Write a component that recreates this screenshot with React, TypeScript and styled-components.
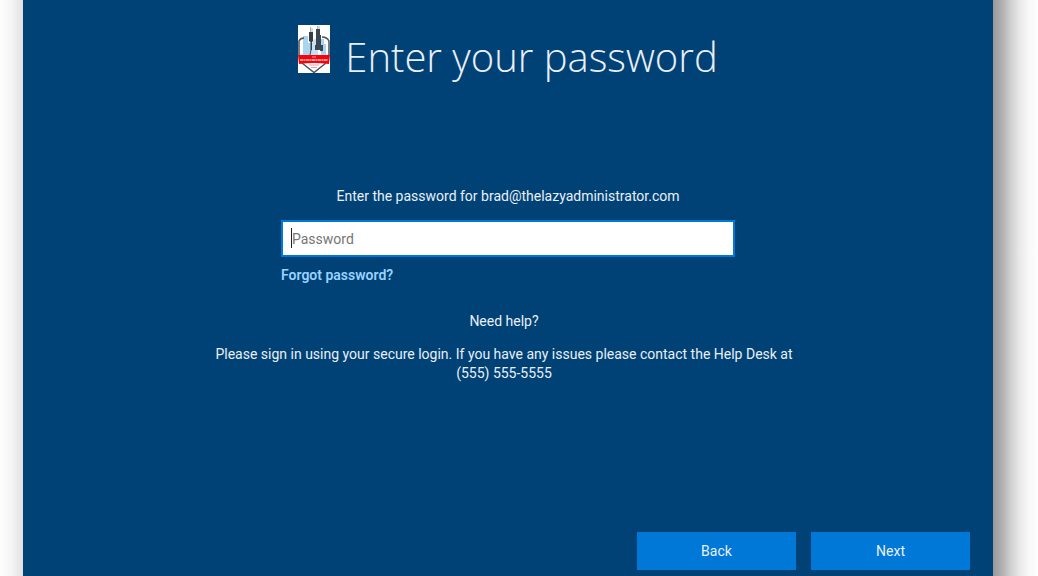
import React from "react";
import styled, { createGlobalStyle } from "styled-components";

const GlobalStyle = createGlobalStyle`
  *, *::before, *::after { box-sizing: border-box; }
  body {
    margin: 0;
    background: #ffffff;
    font-family: "Segoe UI", Roboto, "Open Sans", sans-serif;
    font-size: 14px;
    line-height: 19px;
    color: #e9eff5;
  }
`;

const Page = styled.div`
  display: grid;
  grid-template-columns: 23px minmax(0, 1fr) 45px;
  min-height: 100vh;
`;

const LeftShade = styled.div`
  background: linear-gradient(to right, #fdfdfd, #f5f5f5 50%, #e0e0e0);
`;

const RightShade = styled.div`
  background: linear-gradient(
    to right,
    #989898,
    #b0b0b0 20%,
    #d0d0d0 40%,
    #eaeaea 60%,
    #f8f8f8 80%,
    #fefefe
  );
`;

const Panel = styled.main`
  display: flex;
  flex-direction: column;
  padding: 25px 23px 6px;
  background: #004275;
`;

const Header = styled.header`
  display: flex;
  justify-content: center;
  align-items: flex-start;
  gap: 15px;
`;

const Title = styled.h1`
  margin: 5px 0 0;
  font-family: "Segoe UI", "Open Sans", sans-serif;
  font-size: 40px;
  line-height: 54px;
  font-weight: 300;
`;

const Form = styled.form`
  display: flex;
  flex: 1;
  flex-direction: column;
  align-items: center;
  margin-top: 103px;
`;

const Field = styled.div`
  display: flex;
  flex-direction: column;
  width: 100%;
  max-width: 454px;
`;

const Label = styled.label`
  text-align: center;
`;

const InputBox = styled.div`
  position: relative;
  margin: 14px 0 9px;
`;

const Caret = styled.span`
  position: absolute;
  top: 8px;
  left: 10px;
  width: 1px;
  height: 20px;
  background: #222222;
`;

const PasswordInput = styled.input`
  display: block;
  width: 100%;
  height: 37px;
  padding: 0 9px;
  border: 2px solid #0078d7;
  border-radius: 0;
  outline: none;
  background: #ffffff;
  color: #222222;
  font: inherit;
  caret-color: transparent;

  &::placeholder {
    color: #767676;
    opacity: 1;
  }
`;

const ForgotLink = styled.a`
  align-self: flex-start;
  color: #99d1ff;
  font-weight: 600;
  text-decoration: none;
`;

const Help = styled.section`
  width: 100%;
  max-width: 608px;
  margin-top: 27px;
  padding-right: 8px;
  text-align: center;
`;

const HelpTitle = styled.h2`
  margin: 0 0 14px;
  font: inherit;
`;

const HelpText = styled.p`
  margin: 0;
`;

const Actions = styled.div`
  display: flex;
  align-self: stretch;
  justify-content: flex-end;
  gap: 15px;
  margin-top: auto;
`;

const ActionButton = styled.button`
  width: 159px;
  height: 38px;
  padding: 0;
  border: 0;
  background: #0078d7;
  color: #e9eff5;
  font: inherit;
`;

function Logo() {
  return (
    <svg width="32" height="48" viewBox="0 0 32 48" role="img" aria-label="The Lazy Administrator">
      <rect width="32" height="48" fill="#ffffff" />
      <path d="M5 11h5v7h3v12H5z" fill="#a9d5ee" />
      <path d="M13 20l3-6h4v16h-7z" fill="#c3e2f3" />
      <path d="M23 14h3v5h2v11h-5z" fill="#a9d5ee" />
      <path d="M12.5 2v6M14 3v5M19.5 1v6M21 1v6" stroke="#9aa3aa" strokeWidth="0.8" fill="none" />
      <path d="M11 7h4v9l-1 1v8h-1.500v-8L11 16z" fill="#343e47" />
      <path d="M18 4h4v6h1v10h2v6h-3v-1h-5v-5h1z" fill="#3b4853" />
      <path
        d="M6 13c-2 0-4 1-5 3v14M24 12c4 0 6 2 7 4v14"
        stroke="#4c5257"
        strokeWidth="1.5"
        fill="none"
      />
      <path d="M13 25l-1 5" stroke="#4c5257" />
      <path d="M4 38l12 9.5L28 38" stroke="#4c5257" strokeWidth="1.5" fill="none" />
      <path d="M0 30h32l-1 9q-15-2-30 0z" fill="#f8030b" />
      <path d="M14 32h4" stroke="#ff9ba0" />
      <path d="M2 35h28" stroke="#ffd0d2" strokeWidth="1.5" strokeDasharray="3 0.5 2 0.5" />
      <path d="M11 40h10M13 42.500h6" stroke="#f1a0a3" />
    </svg>
  );
}

export default function App() {
  return (
    <>
      <GlobalStyle />
      <Page>
        <LeftShade />
        <Panel>
          <Header>
            <Logo />
            <Title>Enter your password</Title>
          </Header>
          <Form onSubmit={(event) => event.preventDefault()}>
            <Field>
              <Label htmlFor="password">
                Enter the password for brad@thelazyadministrator.com
              </Label>
              <InputBox>
                <PasswordInput id="password" type="password" placeholder="Password" />
                <Caret aria-hidden="true" />
              </InputBox>
              <ForgotLink href="#forgot">Forgot password?</ForgotLink>
            </Field>
            <Help>
              <HelpTitle>Need help?</HelpTitle>
              <HelpText>
                Please sign in using your secure login. If you have any issues please contact the
                Help Desk at (555) 555-5555
              </HelpText>
            </Help>
            <Actions>
              <ActionButton type="button">Back</ActionButton>
              <ActionButton type="submit">Next</ActionButton>
            </Actions>
          </Form>
        </Panel>
        <RightShade />
      </Page>
    </>
  );
}
